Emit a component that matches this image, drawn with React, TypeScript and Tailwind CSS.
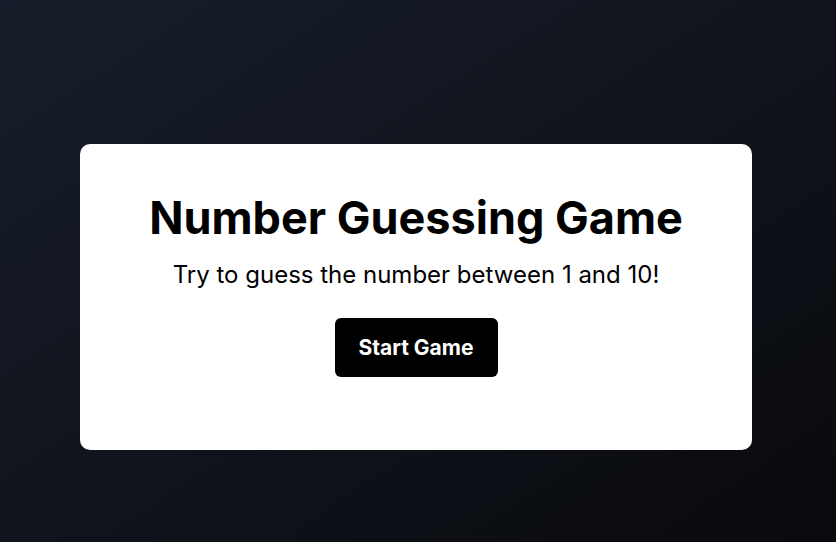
import React, { useState } from 'react';

const App = () => {
  const [started, setStarted] = useState(false);

  return (
    <div
      className="min-h-screen w-full flex justify-start bg-gradient-to-br from-[#171e2b] to-[#090a0e] pl-20 pt-[144px]"
      style={{ fontFamily: 'Inter, "Noto Sans", sans-serif' }}
    >
      <div className="w-[672px] h-[306px] bg-white rounded-[10px] flex flex-col items-center pt-[49px]">
        <h1 className="text-[45px] leading-[50px] font-bold text-black">Number Guessing Game</h1>
        <p className="mt-4 text-[24px] leading-[32px] text-black">
          Try to guess the number between 1 and 10!
        </p>
        <button
          onClick={() => setStarted(!started)}
          className="mt-[27px] bg-black text-white text-[21px] leading-[29px] font-bold px-6 py-[15px] rounded-md"
        >
          Start Game
        </button>
      </div>
    </div>
  );
};

export default App;
